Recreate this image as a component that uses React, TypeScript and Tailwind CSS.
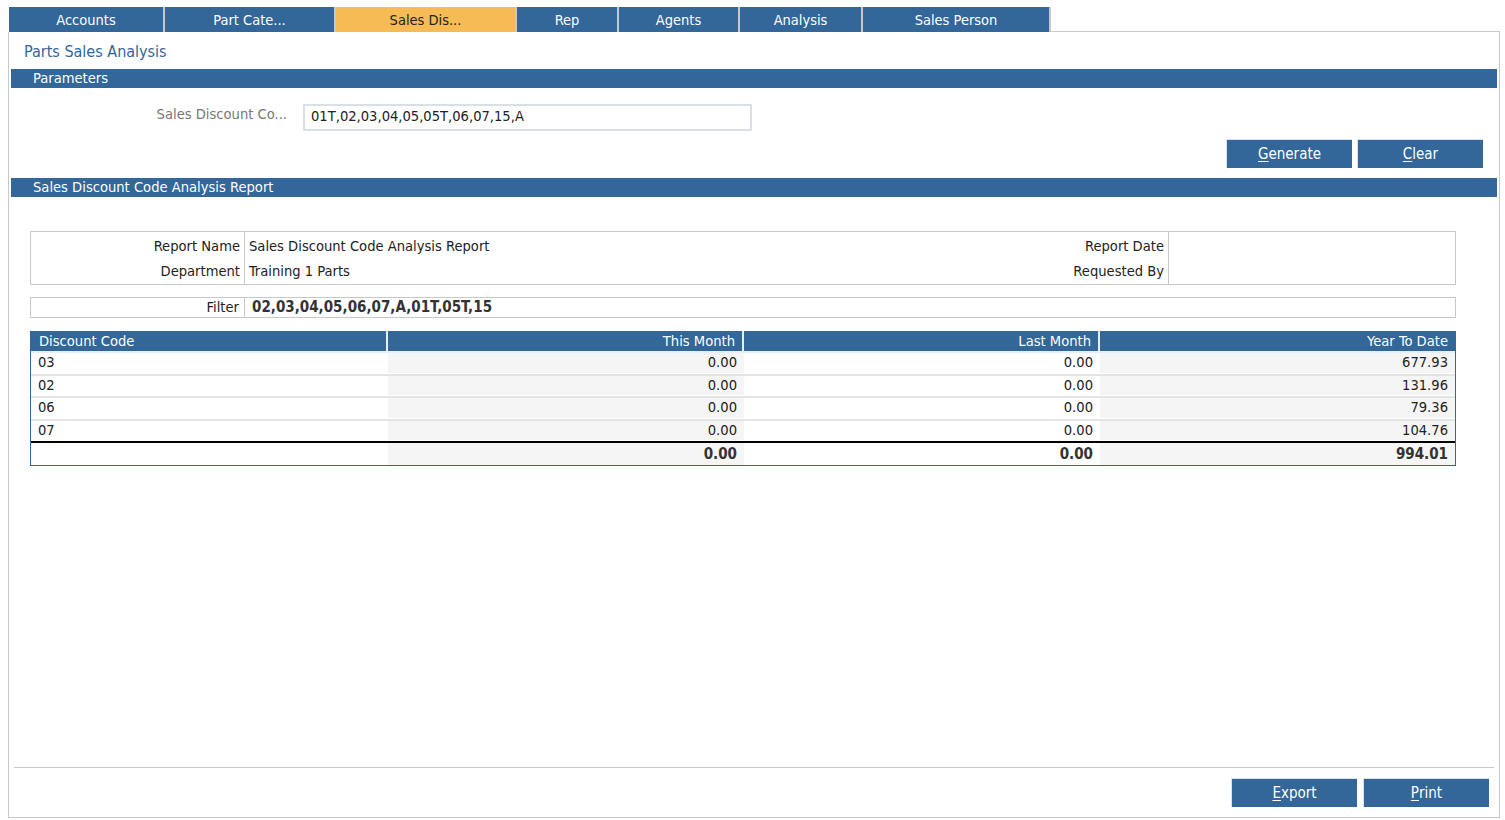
import React from "react";

const tabs = [
  { label: "Accounts", w: "w-[156px]" },
  { label: "Part Cate...", w: "w-[171px]" },
  { label: "Sales Dis...", w: "w-[181px]", active: true },
  { label: "Rep", w: "w-[102px]" },
  { label: "Agents", w: "w-[121px]" },
  { label: "Analysis", w: "w-[123px]" },
  { label: "Sales Person", w: "w-[188px]" },
];

const rows = [
  { code: "03", tm: "0.00", lm: "0.00", ytd: "677.93" },
  { code: "02", tm: "0.00", lm: "0.00", ytd: "131.96" },
  { code: "06", tm: "0.00", lm: "0.00", ytd: "79.36" },
  { code: "07", tm: "0.00", lm: "0.00", ytd: "104.76" },
];

function Btn({ first, rest }: { first: string; rest: string }) {
  return (
    <button className="w-[126px] h-[29px] bg-[#336699] text-white text-[15px] leading-none border-l border-t border-[#d8e0ea] flex items-center justify-center">
      <span className="underline underline-offset-2">{first}</span>
      {rest}
    </button>
  );
}

export default function App() {
  return (
    <div
      className="w-[1505px] h-[820px] bg-white pl-[8px] pt-[7px] text-[#333]"
      style={{ fontFamily: 'Tahoma, "DejaVu Sans Condensed", "Liberation Sans", sans-serif' }}
    >
      {/* Tabs */}
      <div className="flex items-end h-[25px]">
        <div className="w-[1px]" />
        {tabs.map((t) => (
          <div
            key={t.label}
            className={`${t.w} h-[25px] pt-[1px] flex items-center justify-center text-[14.5px] leading-none border-r-2 border-[#c8c8c8] ${
              t.active ? "bg-[#f6bb55] text-[#222]" : "bg-[#336699] text-white"
            }`}
          >
            {t.label}
          </div>
        ))}
        <div className="flex-1 border-b border-[#c8c8c8] mr-[5px]" />
      </div>

      {/* Panel */}
      <div className="w-[1492px] h-[786px] border-l border-r border-b border-[#c8c8c8] flex flex-col">
        <div className="h-[37px] pl-[15px] pt-[3px] flex items-center text-[16px] leading-none text-[#336699]">
          Parts Sales Analysis
        </div>

        <div className="mx-[2px] h-[19px] bg-[#336699] text-white text-[14.6px] leading-none pl-[22px] flex items-center">
          Parameters
        </div>

        <div className="h-[90px] flex flex-col">
          <div className="flex items-center mt-[16px]">
            <div className="w-[280px] text-right text-[14.6px] leading-none text-[#777] pr-[2px] -mt-[6px]">Sales Discount Co...</div>
            <div className="ml-[14px] w-[449px] h-[27px] border-2 border-[#d8dfe6] flex items-center pl-[6px] pb-[3px] text-[14.6px] leading-none text-[#222]">
              01T,02,03,04,05,05T,06,07,15,A
            </div>
          </div>
          <div className="flex justify-end gap-[5px] mr-[16px] mt-[8px]">
            <Btn first="G" rest="enerate" />
            <Btn first="C" rest="lear" />
          </div>
        </div>

        <div className="mx-[2px] h-[19px] bg-[#336699] text-white text-[14.6px] leading-none pl-[22px] flex items-center">
          Sales Discount Code Analysis Report
        </div>

        <div className="ml-[21px] mr-[43px] mt-[34px] flex flex-col text-[14.6px] text-[#222]">
          {/* Info */}
          <div className="h-[54px] border border-[#c8c8c8] flex">
            <div className="w-[214px] border-r border-[#c8c8c8] text-right pr-[4px] pt-[1px] leading-[25px]">
              <div>Report Name</div>
              <div>Department</div>
            </div>
            <div className="flex-1 pl-[4px] pt-[1px] leading-[25px]">
              <div>Sales Discount Code Analysis Report</div>
              <div>Training 1 Parts</div>
            </div>
            <div className="w-[200px] border-r border-[#c8c8c8] text-right pr-[4px] pt-[1px] leading-[25px]">
              <div>Report Date</div>
              <div>Requested By</div>
            </div>
            <div className="w-[286px]" />
          </div>

          {/* Filter */}
          <div className="mt-[12px] h-[21px] border border-[#c8c8c8] flex items-center leading-none">
            <div className="w-[214px] h-full border-r border-[#c8c8c8] text-right pr-[5px] flex items-center justify-end">
              Filter
            </div>
            <div className="pl-[7px] font-bold text-[15px] text-[#333]">02,03,04,05,06,07,A,01T,05T,15</div>
          </div>

          {/* Data table */}
          <div className="mt-[13px] border border-[#336699] border-t-0 leading-none">
            <div className="grid grid-cols-[357px_356px_356px_1fr] h-[22px] bg-[#336699] text-white border-b-2 border-[#e6eef6]">
              <div className="pl-[8px] flex items-center border-r-2 border-[#e6eef6]">Discount Code</div>
              <div className="pr-[7px] flex items-center justify-end border-r-2 border-[#e6eef6]">This Month</div>
              <div className="pr-[7px] flex items-center justify-end border-r-2 border-[#e6eef6]">Last Month</div>
              <div className="pr-[7px] flex items-center justify-end">Year To Date</div>
            </div>
            {rows.map((r, i) => (
              <div
                key={r.code}
                className={`grid grid-cols-[357px_356px_356px_1fr] h-[22.5px] pb-[1px] ${
                  i < rows.length - 1 ? "border-b-2 border-[#e4e4e4]" : "border-b-2 border-black"
                }`}
              >
                <div className="pl-[7px] flex items-center">{r.code}</div>
                <div className="pr-[7px] flex items-center justify-end bg-[#f5f5f5]">{r.tm}</div>
                <div className="pr-[7px] flex items-center justify-end">{r.lm}</div>
                <div className="pr-[7px] flex items-center justify-end bg-[#f5f5f5]">{r.ytd}</div>
              </div>
            ))}
            <div className="grid grid-cols-[357px_356px_356px_1fr] h-[22px] text-[15px] font-bold text-[#333]">
              <div />
              <div className="pr-[7px] flex items-center justify-end bg-[#f5f5f5]">0.00</div>
              <div className="pr-[7px] flex items-center justify-end">0.00</div>
              <div className="pr-[7px] flex items-center justify-end bg-[#f5f5f5]">994.01</div>
            </div>
          </div>
        </div>

        <div className="flex-1" />

        {/* Footer */}
        <div className="mx-[5px] border-t border-[#c8c8c8] h-[50px] flex justify-end items-start pt-[10px] pr-[5px] gap-[6px]">
          <Btn first="E" rest="xport" />
          <Btn first="P" rest="rint" />
        </div>
      </div>
    </div>
  );
}
